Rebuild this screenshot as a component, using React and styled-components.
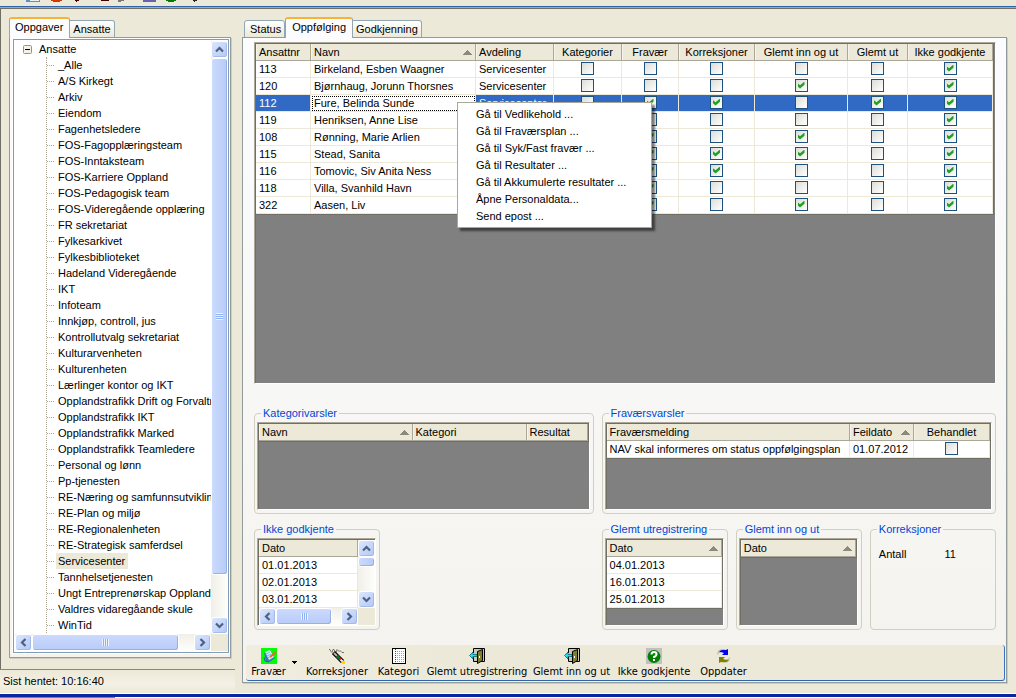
import React from 'react';
import styled, { createGlobalStyle, css } from 'styled-components';

const GlobalStyle = createGlobalStyle`
  * {
    box-sizing: border-box;
  }

  body {
    margin: 0;
    background: #ece9d8;
    color: #000;
    font-family: 'Liberation Sans', Arial, sans-serif;
    font-size: 11px;
    line-height: 16px;
  }

  button,
  input {
    margin: 0;
    padding: 0;
    font: inherit;
    color: inherit;
  }
`;

const Window = styled.div`
  display: flex;
  flex-direction: column;
  height: 100vh;
  min-height: 600px;
`;

const IconStrip = styled.header`
  flex: none;
  display: flex;
  height: 6px;
  padding-left: 24px;
  overflow: hidden;

  svg {
    display: block;
  }
`;

const Workspace = styled.main`
  flex: 1;
  min-height: 0;
  display: flex;
  border-top: 1px solid #2e63ad;
  box-shadow: inset 0 1px #aca899, inset 0 2px #716f64, inset 1px 0 #716f64;
`;

const BottomEdge = styled.footer`
  flex: none;
  height: 5px;
  border-top: 1px solid #fff;
  background: linear-gradient(90deg, #5a82d2 0 115px, #fff 115px) 0 3px no-repeat, #0826a0;
`;

const Sidebar = styled.aside`
  flex: none;
  width: 235px;
  display: flex;
  flex-direction: column;
  padding-top: 10px;
`;

const SidebarTabs = styled.div`
  flex: 1;
  min-height: 0;
  display: flex;
  flex-direction: column;
  margin: 0 4px 11px 9px;
`;

const Content = styled.section`
  flex: 1;
  min-width: 0;
  display: flex;
  flex-direction: column;
  padding: 10px 9px 10px 7px;
`;

const TabList = styled.div`
  flex: none;
  display: flex;
  align-items: flex-end;
  height: 21px;
  padding-left: ${props => (props.$inset ? '2px' : '0')};
  margin-bottom: -1px;
`;

const Tab = styled.button`
  height: 18px;
  padding: 0 3px;
  border: 1px solid #91a7b4;
  border-left-width: 0;
  border-radius: 0 3px 0 0;
  background: linear-gradient(#fff, #ece9d8);
  line-height: 16px;
  white-space: nowrap;

  &:first-child {
    padding-left: 5px;
    border-left-width: 1px;
    border-radius: 3px 3px 0 0;
  }

  ${props =>
    props.$active &&
    css`
      position: relative;
      z-index: 1;
      height: 21px;
      padding: 0 6px 3px;
      border-left-width: 1px;
      border-top: 2px solid #f9b233;
      border-bottom: 0;
      border-radius: 3px 3px 0 0;
      background: #fcfcfe;
      line-height: 15px;
    `}
`;

const TabPanel = styled.div`
  flex: 1;
  min-height: 0;
  display: flex;
  flex-direction: column;
  border: 1px solid #919b9c;
  background: linear-gradient(#fcfcfe, #f4f3ee);
  box-shadow: 1px 1px #d0cdbf;
`;

const SidebarPanel = styled(TabPanel)`
  padding: 1px 1px 4px 3px;
`;

const ContentPanel = styled(TabPanel)`
  padding: 4px 1px 1px 3px;
`;

const TreeFrame = styled.div`
  flex: 1;
  min-height: 0;
  display: grid;
  grid-template-columns: minmax(0, 1fr) 17px;
  grid-template-rows: minmax(0, 1fr) 17px;
  border: 1px solid #7f9db9;
  outline: 1px solid #fff;
  padding: 1px 0 1px 1px;
  background: #fff;
`;

const Tree = styled.ul`
  margin: 0;
  padding: 0;
  overflow: hidden;
  list-style: none;
  white-space: nowrap;
`;

const TreeRoot = styled.li`
  > span {
    display: flex;
    align-items: center;
    gap: 7px;
    padding-left: 8px;
  }
`;

const TreeBranch = styled.ul`
  margin: 0 0 0 31px;
  padding: 0;
  border-left: 1px dotted #aca899;
  list-style: none;
`;

const TreeItem = styled.li`
  display: flex;
  align-items: center;
  height: 16px;

  &::before {
    content: '';
    flex: none;
    width: 7px;
    margin-right: 2px;
    border-top: 1px dotted #aca899;
  }

  span {
    padding: 0 3px 0 2px;
    background: ${props => (props.$selected ? '#ece9d8' : 'transparent')};
  }
`;

const StatusLine = styled.div`
  flex: none;
  height: 24px;
  padding-left: 3px;
  border-top: 1px solid #8b8878;
  background: linear-gradient(#ece9d8, #f3f1e6 60%, #ece9d8);
  line-height: 22px;
`;

const ScrollTrack = styled.div`
  display: flex;
  min-width: 0;
  min-height: 0;
  flex-direction: ${props => (props.$vertical ? 'column' : 'row')};
  background: linear-gradient(${props => (props.$vertical ? '90deg' : '180deg')}, #f0efe8, #fefefb);
`;

const ScrollButton = styled.button`
  flex: none;
  display: flex;
  align-items: center;
  justify-content: center;
  width: 17px;
  height: 17px;
  border: 1px solid #fff;
  border-radius: 3px;
  background: linear-gradient(135deg, #dbe6fe, #b4c8f6);
  box-shadow: inset -1px -1px #a5b9ea;
`;

const ScrollThumb = styled.div`
  flex: ${props => props.$size} 1 0;
  display: flex;
  align-items: center;
  justify-content: center;
  border: 1px solid #fff;
  border-radius: 3px;
  background: linear-gradient(${props => (props.$vertical ? '90deg' : '180deg')}, #cbdafd, #b8cbf8);
  box-shadow: inset -1px -1px #98b0e4;
`;

const ScrollRest = styled.div`
  flex: ${props => props.$size} 1 0;
`;

const Grip = styled.div`
  width: 7px;
  height: 7px;
  background: repeating-linear-gradient(
    ${props => (props.$vertical ? '180deg' : '90deg')},
    #eef4fe 0 1px,
    #8cb0f8 1px 2px
  );
`;

const ScrollCorner = styled.div`
  background: #ece9d8;
`;

const GridFrame = styled.div`
  position: relative;
  flex: 1;
  min-height: 0;
  border: 1px solid #aca899;
  border-right-color: #fff;
  border-bottom-color: #fff;
  background: #808080;
  box-shadow: inset 1px 1px #716f64;
  padding: 1px 0 0 1px;
`;

const MainGridFrame = styled(GridFrame)`
  margin: 0 9px 22px 8px;
  padding-right: 1px;
`;

const ScrollGridFrame = styled(GridFrame)`
  display: grid;
  grid-template-columns: minmax(0, 1fr) 17px;
  grid-template-rows: minmax(0, 1fr) 17px;

  > div:first-child {
    overflow: hidden;
    background: #fff;
  }
`;

const Table = styled.table`
  width: 100%;
  table-layout: fixed;
  border-collapse: separate;
  border-spacing: 0;
  background: #fff;
  border-bottom: ${props => (props.$flat ? '0' : '1px solid #716f64')};
  border-right: ${props => (props.$flat ? '0' : '1px solid #716f64')};
`;

const HeaderCell = styled.th`
  height: 17px;
  padding: 0 3px;
  border-right: 1px solid #aca899;
  border-bottom: 1px solid #aca899;
  background: #ece9d8;
  box-shadow: inset 1px 0 #f6f4ea;
  font-weight: normal;
  line-height: 16px;
  text-align: ${props => (props.$center ? 'center' : 'left')};
  white-space: nowrap;

  > div {
    display: flex;
    align-items: center;
    justify-content: space-between;
  }
`;

const Cell = styled.td`
  height: 17px;
  padding: 0 3px;
  border-right: 1px solid #ece9d8;
  border-bottom: 1px solid #ece9d8;
  line-height: 16px;
  text-align: ${props => (props.$center ? 'center' : 'left')};
  white-space: nowrap;
  overflow: hidden;
`;

const Row = styled.tr`
  ${props =>
    props.$selected &&
    css`
      background: #316ac5;
      color: #fff;
    `}
`;

const FocusCell = styled(Cell)`
  background: #fff;
  color: #000;
  outline: 1px dotted #000;
  outline-offset: -2px;
`;

const CheckBox = styled.input`
  appearance: none;
  display: block;
  width: 13px;
  height: 13px;
  margin: 0 auto 2px;
  border: 1px solid #1c5180;
  background: linear-gradient(135deg, #dcdcd7, #fff);

  &:checked::after {
    content: '';
    display: block;
    width: 7px;
    height: 7px;
    margin: 2px;
    background: #21a121;
    clip-path: polygon(0 24%, 0 68%, 36% 100%, 100% 46%, 100% 0, 36% 54%);
  }
`;

const ContextMenu = styled.ul`
  position: absolute;
  top: 59px;
  left: 202px;
  z-index: 2;
  width: 195px;
  margin: 0;
  padding: 3px 2px 2px;
  border: 1px solid #aca899;
  background: #fff;
  box-shadow: 3px 3px 2px rgba(0, 0, 0, 0.5);
  list-style: none;
`;

const MenuButton = styled.button`
  display: block;
  width: 100%;
  height: 17px;
  padding-left: 16px;
  border: 0;
  background: none;
  line-height: 17px;
  text-align: left;
  white-space: nowrap;
`;

const GroupRow = styled.div`
  flex: none;
  display: grid;
  grid-template-columns: 340fr 395fr;
  gap: 8px;
  height: 108px;
  margin: 0 9px 8px 8px;
`;

const GroupHalf = styled.div`
  display: grid;
  grid-template-columns: ${props => props.$columns};
  gap: 8px;
  min-width: 0;
`;

const GroupBox = styled.fieldset`
  min-width: 0;
  height: 108px;
  margin: 0;
  padding: 2px 3px 3px 2px;
  border: 1px solid #d0d0bf;
  border-radius: 4px;
  display: flex;
  flex-direction: column;

  legend {
    height: 14px;
    margin-left: 4px;
    padding: 0 2px;
    color: #0046d5;
    line-height: 14px;
  }
`;

const Summary = styled.dl`
  display: flex;
  gap: 38px;
  margin: 8px 6px;

  dd {
    margin: 0;
  }
`;

const Toolbar = styled.div`
  flex: none;
  display: flex;
  height: 36px;
  margin-top: 7px;
  padding-left: 4px;
  border-right: 1px solid #3b6fc4;
  border-bottom: 1px solid #2e63ad;
  border-radius: 3px;
  background: linear-gradient(90deg, #f0ede0, #ece9d8 30%);
`;

const ToolButton = styled.button`
  display: flex;
  flex-direction: column;
  align-items: center;
  gap: 1px;
  width: ${props => props.$width};
  padding-top: 3px;
  border: 0;
  background: none;
  font-family: 'DejaVu Sans Condensed', 'DejaVu Sans', sans-serif;
  line-height: 14px;
  white-space: nowrap;
`;

const DropButton = styled.button`
  width: 14px;
  padding: 0 5px;
  border: 0;
  background: none;

  svg {
    display: block;
  }
`;

const ChevronIcon = ({ direction }) => {
  const angle = { up: 0, right: 90, down: 180, left: 270 }[direction];

  return (
    <svg width="9" height="9" viewBox="0 0 9 9">
      <path
        d="M1 6.5L4.5 3L8 6.5"
        transform={`rotate(${angle} 4.5 4.5)`}
        fill="none"
        stroke="#4d6185"
        strokeWidth="2.2"
      />
    </svg>
  );
};

const SortArrow = () => (
  <svg width="9" height="5" viewBox="0 0 9 5" shapeRendering="crispEdges">
    <path d="M4 0h1v1h1v1h1v1h1v1h1v1H0V4h1V3h1V2h1V1h1z" fill="#8b8a7c" />
  </svg>
);

const ExpandIcon = () => (
  <svg width="9" height="9" viewBox="0 0 9 9">
    <rect x="0.5" y="0.5" width="8" height="8" rx="1" fill="#f3f1e8" stroke="#7898b5" />
    <path d="M2 4.5h5" stroke="#000" />
  </svg>
);

const AbsenceIcon = () => (
  <svg width="16" height="16" viewBox="0 0 16 16">
    <path d="M0 0h16v16H0z" fill="#0f0" />
    <path d="M3 5l6-3 5 8-5 4-4-1z" fill="#3878b8" />
    <path d="M4 4l5-2 4 7-5 3z" fill="#d8f0fc" />
    <path d="M5 6l4-2M6 8l4-2M7 10l3-2" stroke="#68b8e0" />
    <path d="M9 9l6-5" stroke="#e86828" strokeWidth="2" />
    <path d="M3 9l1 4 4 1" stroke="#1c68a0" fill="none" />
  </svg>
);

const CorrectionIcon = () => (
  <svg width="16" height="16" viewBox="0 0 16 16">
    <path d="M0 1.5h1l1 2 1 1 1-3h1l1 2 1 1 1-3 2 2 1-1 2 2h2" fill="none" stroke="#555" strokeWidth="0.8" />
    <path d="M4.500 4.500l9 9" stroke="#000" strokeWidth="4.5" />
    <path d="M5 5l3 3" stroke="#b8b8a8" strokeWidth="2" />
    <path d="M8 8l3 3" stroke="#087830" strokeWidth="3" />
    <path d="M9.500 7.500l-2 2M12 10l-2 2" stroke="#f00" />
    <path d="M11.500 11.500l2 2" stroke="#fff" strokeWidth="2" />
    <path d="M13 13h3v3h-3z" fill="#ffd800" />
  </svg>
);

const CategoryIcon = () => (
  <svg width="16" height="16" viewBox="0 0 16 16" shapeRendering="crispEdges">
    <path d="M1 0h14v16H1z" fill="#fff" />
    <path d="M1.5 0v16M1 .5h14M14.5 0v16M1 15.5h14" fill="none" stroke="#000" />
    <path d="M4.5 1v14" stroke="#f00" strokeDasharray="1 1" />
    <path
      d="M6 3.5h8M6 5.5h8M6 7.5h8M6 9.5h8M6 11.5h8M6 13.5h8"
      stroke="#18d8e8"
      strokeDasharray="1 1"
    />
  </svg>
);

const DoorIcon = () => (
  <svg width="16" height="16" viewBox="0 0 16 16">
    <path d="M4.5 5V.5h11v13H12M4.5 9v4.5H8" fill="none" stroke="#000" />
    <path d="M5 1h10v12H5z" fill="#c8c8c0" />
    <path d="M8.500 3.500l5-2v11l-5 3z" fill="#808028" stroke="#000" />
    <path d="M10.500 8v2" stroke="#fff" />
    <path d="M.5 7.500l3.500-3.500v2.500h4v2h-4v2.500z" fill="#20e0f0" stroke="#005060" strokeWidth="0.7" />
  </svg>
);

const HelpIcon = () => (
  <svg width="16" height="16" viewBox="0 0 16 16">
    <path d="M0 0h16v16H0z" fill="#c0c0c0" />
    <circle cx="8" cy="8.500" r="6.500" fill="#008000" />
    <path d="M5.500 6.500q0-2.500 2.500-2.500t2.500 2-2.500 3v1" fill="none" stroke="#fff" strokeWidth="2" />
    <path d="M7 11h2v2H7z" fill="#fff" />
  </svg>
);

const RefreshIcon = () => (
  <svg width="16" height="16" viewBox="0 0 16 16">
    <path d="M1 7Q1 2 5 1l3 1-3 2z" fill="#c4c4c0" />
    <path d="M14 9q0 5-4 6l-3-1 3-2z" fill="#c4c4c0" />
    <path d="M3 4Q5 1 10 2l2-1v6H6l2-2Q6 4 3 4z" fill="#0000f0" />
    <path d="M13 12q-2 3-8 2l-2 1V9h6l-2 2q3 1 6 1z" fill="#808000" />
  </svg>
);

const StripIcons = () => (
  <svg width="190" height="6" viewBox="24 0 190 6" shapeRendering="crispEdges">
    <path d="M26 0h14v2H26z" fill="#5a90d0" />
    <path d="M30 0h9v1h-9z" fill="#e8f0fc" />
    <path d="M51 0h11v1h-2v1h-7V1h-2z" fill="#d03808" />
    <path d="M75 0h4v1h-2v1h-1V1h-1zM101 0h8v1h-8z" fill="#400" />
    <path d="M118 0h6v1h-3v1h-3z" fill="#777" />
    <path d="M143 0h13v2h-13z" fill="#6860b0" />
    <path d="M166 0h10v1h-2v1h-6V1h-2z" fill="#087808" />
    <path d="M193 0h4v1h-2v1h-1V1h-1z" fill="#222" />
  </svg>
);

const teams = [
  '_Alle',
  'A/S Kirkegt',
  'Arkiv',
  'Eiendom',
  'Fagenhetsledere',
  'FOS-Fagopplæringsteam',
  'FOS-Inntaksteam',
  'FOS-Karriere Oppland',
  'FOS-Pedagogisk team',
  'FOS-Videregående opplæring',
  'FR sekretariat',
  'Fylkesarkivet',
  'Fylkesbiblioteket',
  'Hadeland Videregående',
  'IKT',
  'Infoteam',
  'Innkjøp, controll, jus',
  'Kontrollutvalg sekretariat',
  'Kulturarvenheten',
  'Kulturenheten',
  'Lærlinger kontor og IKT',
  'Opplandstrafikk Drift og Forvaltning',
  'Opplandstrafikk IKT',
  'Opplandstrafikk Marked',
  'Opplandstrafikk Teamledere',
  'Personal og lønn',
  'Pp-tjenesten',
  'RE-Næring og samfunnsutvikling',
  'RE-Plan og miljø',
  'RE-Regionalenheten',
  'RE-Strategisk samferdsel',
  'Servicesenter',
  'Tannhelsetjenesten',
  'Ungt Entreprenørskap Oppland',
  'Valdres vidaregåande skule',
  'WinTid',
];

const checkColumns = ['Kategorier', 'Fravær', 'Korreksjoner', 'Glemt inn og ut', 'Glemt ut', 'Ikke godkjente'];

// one flag per entry in checkColumns
const employees = [
  { id: '113', name: 'Birkeland, Esben Waagner', flags: [0, 0, 0, 0, 0, 1] },
  { id: '120', name: 'Bjørnhaug, Jorunn Thorsnes', flags: [0, 0, 0, 1, 0, 1] },
  { id: '112', name: 'Fure, Belinda Sunde', flags: [0, 1, 1, 0, 1, 1] },
  { id: '119', name: 'Henriksen, Anne Lise', flags: [0, 0, 0, 0, 0, 1] },
  { id: '108', name: 'Rønning, Marie Arlien', flags: [0, 1, 0, 1, 0, 1] },
  { id: '115', name: 'Stead, Sanita', flags: [0, 1, 1, 1, 0, 1] },
  { id: '116', name: 'Tomovic, Siv Anita Ness', flags: [0, 1, 1, 0, 0, 1] },
  { id: '118', name: 'Villa, Svanhild Havn', flags: [0, 1, 0, 0, 0, 1] },
  { id: '322', name: 'Aasen, Liv', flags: [0, 1, 0, 1, 0, 1] },
];

const menuItems = [
  'Gå til Vedlikehold ...',
  'Gå til Fraværsplan ...',
  'Gå til Syk/Fast fravær ...',
  'Gå til Resultater ...',
  'Gå til Akkumulerte resultater ...',
  'Åpne Personaldata...',
  'Send epost ...',
];

const tools = [
  { label: 'Korreksjoner', icon: CorrectionIcon, width: '72px' },
  { label: 'Kategori', icon: CategoryIcon, width: '51px' },
  { label: 'Glemt utregistrering', icon: DoorIcon, width: '106px' },
  { label: 'Glemt inn og ut', icon: DoorIcon, width: '83px' },
  { label: 'Ikke godkjente', icon: HelpIcon, width: '82px' },
  { label: 'Oppdater', icon: RefreshIcon, width: '57px' },
];

const ScrollBar = ({ vertical, thumb, rest, grip = true }) => (
  <ScrollTrack $vertical={vertical}>
    <ScrollButton type="button" aria-label={vertical ? 'Opp' : 'Venstre'}>
      <ChevronIcon direction={vertical ? 'up' : 'left'} />
    </ScrollButton>
    <ScrollThumb $vertical={vertical} $size={thumb}>
      {grip && <Grip $vertical={vertical} />}
    </ScrollThumb>
    <ScrollRest $size={rest} />
    <ScrollButton type="button" aria-label={vertical ? 'Ned' : 'Høyre'}>
      <ChevronIcon direction={vertical ? 'down' : 'right'} />
    </ScrollButton>
  </ScrollTrack>
);

const Columns = ({ widths }) => (
  <colgroup>
    {widths.map((width, index) => (
      <col key={index} width={width} />
    ))}
  </colgroup>
);

const SortedHeader = ({ children }) => (
  <HeaderCell aria-sort="ascending">
    <div>
      {children}
      <SortArrow />
    </div>
  </HeaderCell>
);

const DateTable = ({ dates, sorted, flat }) => (
  <Table $flat={flat}>
    <thead>
      <tr>{sorted ? <SortedHeader>Dato</SortedHeader> : <HeaderCell>Dato</HeaderCell>}</tr>
    </thead>
    <tbody>
      {dates.map(date => (
        <tr key={date}>
          <Cell>{date}</Cell>
        </tr>
      ))}
    </tbody>
  </Table>
);

const EmployeeGrid = () => (
  <MainGridFrame>
    <Table>
      <Columns widths={[55, undefined, 78, 68, 57, 76, 93, 60, 85]} />
      <thead>
        <tr>
          <HeaderCell>Ansattnr</HeaderCell>
          <SortedHeader>Navn</SortedHeader>
          <HeaderCell>Avdeling</HeaderCell>
          {checkColumns.map(column => (
            <HeaderCell key={column} $center>
              {column}
            </HeaderCell>
          ))}
        </tr>
      </thead>
      <tbody>
        {employees.map(({ id, name, flags }) => {
          const selected = id === '112';
          const NameCell = selected ? FocusCell : Cell;

          return (
            <Row key={id} $selected={selected}>
              <Cell>{id}</Cell>
              <NameCell>{name}</NameCell>
              <Cell>Servicesenter</Cell>
              {flags.map((flag, index) => (
                <Cell key={index} $center>
                  <CheckBox
                    type="checkbox"
                    aria-label={`${checkColumns[index]}, ${name}`}
                    defaultChecked={Boolean(flag)}
                  />
                </Cell>
              ))}
            </Row>
          );
        })}
      </tbody>
    </Table>
    <ContextMenu>
      {menuItems.map(item => (
        <li key={item}>
          <MenuButton type="button">{item}</MenuButton>
        </li>
      ))}
    </ContextMenu>
  </MainGridFrame>
);

const App = () => {
  return (
    <>
      <GlobalStyle />
      <Window>
        <IconStrip>
          <StripIcons />
        </IconStrip>
        <Workspace>
          <Sidebar>
            <SidebarTabs>
              <TabList>
                <Tab type="button" $active>
                  Oppgaver
                </Tab>
                <Tab type="button">Ansatte</Tab>
              </TabList>
              <SidebarPanel>
                <TreeFrame>
                  <Tree>
                    <TreeRoot>
                      <span>
                        <ExpandIcon />
                        Ansatte
                      </span>
                      <TreeBranch>
                        {teams.map(team => (
                          <TreeItem key={team} $selected={team === 'Servicesenter'}>
                            <span>{team}</span>
                          </TreeItem>
                        ))}
                      </TreeBranch>
                    </TreeRoot>
                  </Tree>
                  <ScrollBar vertical thumb={518} rest={42} />
                  <ScrollBar thumb={147} rest={15} />
                  <ScrollCorner />
                </TreeFrame>
              </SidebarPanel>
            </SidebarTabs>
            <StatusLine>Sist hentet: 10:16:40</StatusLine>
          </Sidebar>

          <Content>
            <TabList $inset>
              <Tab type="button">Status</Tab>
              <Tab type="button" $active>
                Oppfølging
              </Tab>
              <Tab type="button">Godkjenning</Tab>
            </TabList>
            <ContentPanel>
              <EmployeeGrid />

              <GroupRow>
                <GroupBox>
                  <legend>Kategorivarsler</legend>
                  <GridFrame>
                    <Table>
                      <Columns widths={[undefined, 114, 61]} />
                      <thead>
                        <tr>
                          <SortedHeader>Navn</SortedHeader>
                          <HeaderCell>Kategori</HeaderCell>
                          <HeaderCell>Resultat</HeaderCell>
                        </tr>
                      </thead>
                    </Table>
                  </GridFrame>
                </GroupBox>
                <GroupBox>
                  <legend>Fraværsvarsler</legend>
                  <GridFrame>
                    <Table>
                      <Columns widths={[undefined, 64, 76]} />
                      <thead>
                        <tr>
                          <HeaderCell>Fraværsmelding</HeaderCell>
                          <SortedHeader>Feildato</SortedHeader>
                          <HeaderCell $center>Behandlet</HeaderCell>
                        </tr>
                      </thead>
                      <tbody>
                        <tr>
                          <Cell>NAV skal informeres om status oppfølgingsplan</Cell>
                          <Cell>01.07.2012</Cell>
                          <Cell $center>
                            <CheckBox type="checkbox" aria-label="Behandlet" />
                          </Cell>
                        </tr>
                      </tbody>
                    </Table>
                  </GridFrame>
                </GroupBox>
              </GroupRow>

              <GroupRow>
                <GroupHalf $columns="126px">
                  <GroupBox>
                    <legend>Ikke godkjente</legend>
                    <ScrollGridFrame>
                      <div>
                        <DateTable flat dates={['01.01.2013', '02.01.2013', '03.01.2013']} />
                      </div>
                      <ScrollBar vertical thumb={9} rest={26} grip={false} />
                      <ScrollBar thumb={56} rest={9} />
                      <ScrollCorner />
                    </ScrollGridFrame>
                  </GroupBox>
                </GroupHalf>
                <GroupHalf $columns="repeat(3, 1fr)">
                  <GroupBox>
                    <legend>Glemt utregistrering</legend>
                    <GridFrame>
                      <DateTable sorted dates={['04.01.2013', '16.01.2013', '25.01.2013']} />
                    </GridFrame>
                  </GroupBox>
                  <GroupBox>
                    <legend>Glemt inn og ut</legend>
                    <GridFrame>
                      <DateTable sorted dates={[]} />
                    </GridFrame>
                  </GroupBox>
                  <GroupBox>
                    <legend>Korreksjoner</legend>
                    <Summary>
                      <dt>Antall</dt>
                      <dd>11</dd>
                    </Summary>
                  </GroupBox>
                </GroupHalf>
              </GroupRow>

              <Toolbar>
                <ToolButton type="button" $width="37px">
                  <AbsenceIcon />
                  Fravær
                </ToolButton>
                <DropButton type="button" aria-label="Flere valg">
                  <svg width="5" height="3" viewBox="0 0 5 3" shapeRendering="crispEdges">
                    <path d="M0 0h5v1H4v1H3v1H2V2H1V1H0z" />
                  </svg>
                </DropButton>
                {tools.map(({ label, icon: Icon, width }) => (
                  <ToolButton key={label} type="button" $width={width}>
                    <Icon />
                    {label}
                  </ToolButton>
                ))}
              </Toolbar>
            </ContentPanel>
          </Content>
        </Workspace>
        <BottomEdge />
      </Window>
    </>
  );
};

export default App;
